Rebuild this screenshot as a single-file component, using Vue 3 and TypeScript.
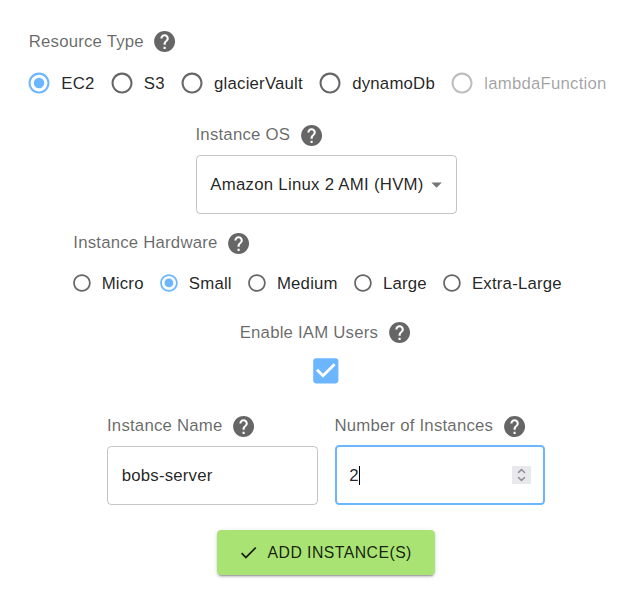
<script setup lang="ts">
import { ref } from 'vue'

interface Option {
  label: string
  disabled?: boolean
}

const resourceTypes: Option[] = [
  { label: 'EC2' },
  { label: 'S3' },
  { label: 'glacierVault' },
  { label: 'dynamoDb' },
  { label: 'lambdaFunction', disabled: true },
]
const hardware: Option[] = [
  { label: 'Micro' },
  { label: 'Small' },
  { label: 'Medium' },
  { label: 'Large' },
  { label: 'Extra-Large' },
]

const resourceType = ref('EC2')
const size = ref('Small')
const iam = ref(true)
const instanceName = ref('bobs-server')
const count = ref(2)

const helpPath =
  'M12 2C6.48 2 2 6.48 2 12s4.48 10 10 10 10-4.48 10-10S17.52 2 12 2zm1 17h-2v-2h2v2zm2.07-7.75l-.9.92C13.45 12.9 13 13.5 13 15h-2v-.5c0-1.1.45-2.1 1.17-2.83l1.24-1.26c.37-.36.59-.86.59-1.41 0-1.1-.9-2-2-2s-2 .9-2 2H8c0-2.21 1.79-4 4-4s4 1.79 4 4c0 .88-.36 1.68-.93 2.25z'
const ringPath =
  'M12 2C6.48 2 2 6.48 2 12s4.48 10 10 10 10-4.48 10-10S17.52 2 12 2zm0 18c-4.42 0-8-3.58-8-8s3.58-8 8-8 8 3.58 8 8-3.58 8-8 8z'
</script>

<template>
  <main class="form">
    <section class="group type">
      <div class="label">
        <span class="text">Resource Type</span>
        <svg class="icon" viewBox="0 0 24 24"><path :d="helpPath" /></svg>
      </div>
      <div class="radios">
        <div
          v-for="o in resourceTypes"
          :key="o.label"
          class="radio"
          :class="{ checked: o.label === resourceType, disabled: o.disabled }"
          @click="!o.disabled && (resourceType = o.label)"
        >
          <svg class="icon" viewBox="0 0 24 24">
            <path :d="ringPath" />
            <circle v-if="o.label === resourceType" cx="12" cy="12" r="5" />
          </svg>
          <span class="text">{{ o.label }}</span>
        </div>
      </div>
    </section>

    <section class="group os">
      <div class="label raised">
        <span class="text">Instance OS</span>
        <svg class="icon" viewBox="0 0 24 24"><path :d="helpPath" /></svg>
      </div>
      <div class="outlined select">
        <span class="text">Amazon Linux 2 AMI (HVM)</span>
        <svg class="icon" viewBox="0 0 24 24"><path d="M7 10l5 5 5-5z" /></svg>
      </div>
    </section>

    <section class="group hardware">
      <div class="label raised">
        <span class="text">Instance Hardware</span>
        <svg class="icon" viewBox="0 0 24 24"><path :d="helpPath" /></svg>
      </div>
      <div class="radios small">
        <div
          v-for="o in hardware"
          :key="o.label"
          class="radio"
          :class="{ checked: o.label === size }"
          @click="size = o.label"
        >
          <svg class="icon" viewBox="0 0 24 24">
            <path :d="ringPath" />
            <circle v-if="o.label === size" cx="12" cy="12" r="5" />
          </svg>
          <span class="text">{{ o.label }}</span>
        </div>
      </div>
    </section>

    <section class="group iam">
      <div class="label">
        <span class="text">Enable IAM Users</span>
        <svg class="icon" viewBox="0 0 24 24"><path :d="helpPath" /></svg>
      </div>
      <div class="checkbox" @click="iam = !iam">
        <svg class="icon" viewBox="0 0 24 24">
          <path
            v-if="iam"
            d="M19 3H5c-1.11 0-2 .9-2 2v14c0 1.1.89 2 2 2h14c1.11 0 2-.9 2-2V5c0-1.1-.89-2-2-2zm-9 14l-5-5 1.41-1.41L10 14.17l7.59-7.59L19 8l-9 9z"
          />
          <path
            v-else
            d="M19 5v14H5V5h14m0-2H5c-1.1 0-2 .9-2 2v14c0 1.1.9 2 2 2h14c1.1 0 2-.9 2-2V5c0-1.1-.9-2-2-2z"
          />
        </svg>
      </div>
    </section>

    <div class="fields">
      <section class="group field">
        <div class="label raised">
          <span class="text">Instance Name</span>
          <svg class="icon" viewBox="0 0 24 24"><path :d="helpPath" /></svg>
        </div>
        <div class="outlined">
          <span class="text">{{ instanceName }}</span>
        </div>
      </section>
      <section class="group field">
        <div class="label raised">
          <span class="text">Number of Instances</span>
          <svg class="icon" viewBox="0 0 24 24"><path :d="helpPath" /></svg>
        </div>
        <div class="outlined focused">
          <span class="text">{{ count }}</span>
          <i class="caret"></i>
          <svg class="spinner" viewBox="0 0 19 18" @click="count++">
            <path d="M6.5 6.5l3-3 3 3M6.5 11.5l3 3 3-3" />
          </svg>
        </div>
      </section>
    </div>

    <button class="add" type="button">
      <svg class="icon" viewBox="0 0 24 24">
        <path d="M9 16.17L4.83 12l-1.42 1.41L9 19 21 7l-1.41-1.41z" />
      </svg>
      <span>ADD INSTANCE(S)</span>
    </button>
  </main>
</template>

<style>
body {
  background: #fff;
}
</style>

<style scoped>
.form {
  box-sizing: border-box;
  width: 643px;
  height: 601px;
  padding: 29px 0 0 9px;
  display: flex;
  flex-direction: column;
  align-items: center;
  font-family: 'Liberation Sans', Arial, sans-serif;
  font-size: 16.8px;
  letter-spacing: 0.2px;
  line-height: 25px;
  color: rgba(0, 0, 0, 0.87);
}
.text {
  white-space: nowrap;
}
.icon {
  display: block;
  flex: none;
  width: 25.2px;
  height: 25.2px;
  fill: currentColor;
}
.group {
  display: flex;
  flex-direction: column;
}
.type {
  height: 94px;
}
.os {
  height: 108px;
}
.hardware {
  height: 89px;
}
.iam {
  height: 94px;
}
.label {
  display: flex;
  gap: 8.4px;
  height: 25px;
  color: rgba(0, 0, 0, 0.6);
}
.raised .text {
  line-height: 23px;
}
.os .label,
.iam .label {
  gap: 9px;
}
.radios {
  display: flex;
  margin-top: 7.2px;
}
.radio {
  display: flex;
  align-items: center;
  margin-left: -11.55px;
  margin-right: 16.8px;
}
.radio .icon {
  padding: 9.45px;
  color: rgba(0, 0, 0, 0.6);
}
.small .icon {
  width: 21px;
  height: 21px;
}
.radio.checked .icon,
.checkbox {
  color: #6cb6ff;
}
.radio.disabled .icon {
  color: rgba(0, 0, 0, 0.26);
}
.radio.disabled .text {
  color: rgba(0, 0, 0, 0.38);
}
.outlined {
  box-sizing: border-box;
  display: flex;
  align-items: center;
  height: 59px;
  margin-top: 7px;
  padding: 0 13.7px;
  border: 1px solid rgba(0, 0, 0, 0.23);
  border-radius: 4.2px;
}
.select {
  width: 261px;
  padding-right: 6.3px;
  justify-content: space-between;
  letter-spacing: 0.27px;
}
.select .icon {
  color: rgba(0, 0, 0, 0.54);
}
.checkbox {
  display: flex;
  justify-content: center;
  margin-top: 9px;
}
.checkbox .icon {
  width: 33.6px;
  height: 33.6px;
}
.fields {
  display: flex;
  gap: 17px;
}
.field {
  width: 210.5px;
}
.focused {
  height: 60px;
  margin-top: 6px;
  margin-bottom: 0;
  padding: 0 12px 0 12.7px;
  border: 2px solid #6cb6ff;
}
.caret {
  width: 1px;
  height: 19px;
  background: #000;
}
.spinner {
  width: 19px;
  height: 18px;
  margin-left: auto;
  background: #e9e9ed;
  fill: none;
  stroke: #8f8f9d;
  stroke-width: 1.6;
  stroke-linecap: round;
  stroke-linejoin: round;
}
.add {
  display: flex;
  align-items: center;
  justify-content: center;
  gap: 8.4px;
  box-sizing: border-box;
  width: 218px;
  height: 45px;
  margin-top: 25px;
  padding: 0 2px 0 0;
  border: 0;
  border-radius: 4.2px;
  background: #a9e373;
  color: rgba(0, 0, 0, 0.87);
  font-family: inherit;
  font-size: 15.75px;
  letter-spacing: 0.48px;
  box-shadow:
    0 3px 1px -2px rgba(0, 0, 0, 0.2),
    0 2px 2px 0 rgba(0, 0, 0, 0.14),
    0 1px 5px 0 rgba(0, 0, 0, 0.12);
}
.add .icon {
  width: 21px;
  height: 21px;
}
</style>
